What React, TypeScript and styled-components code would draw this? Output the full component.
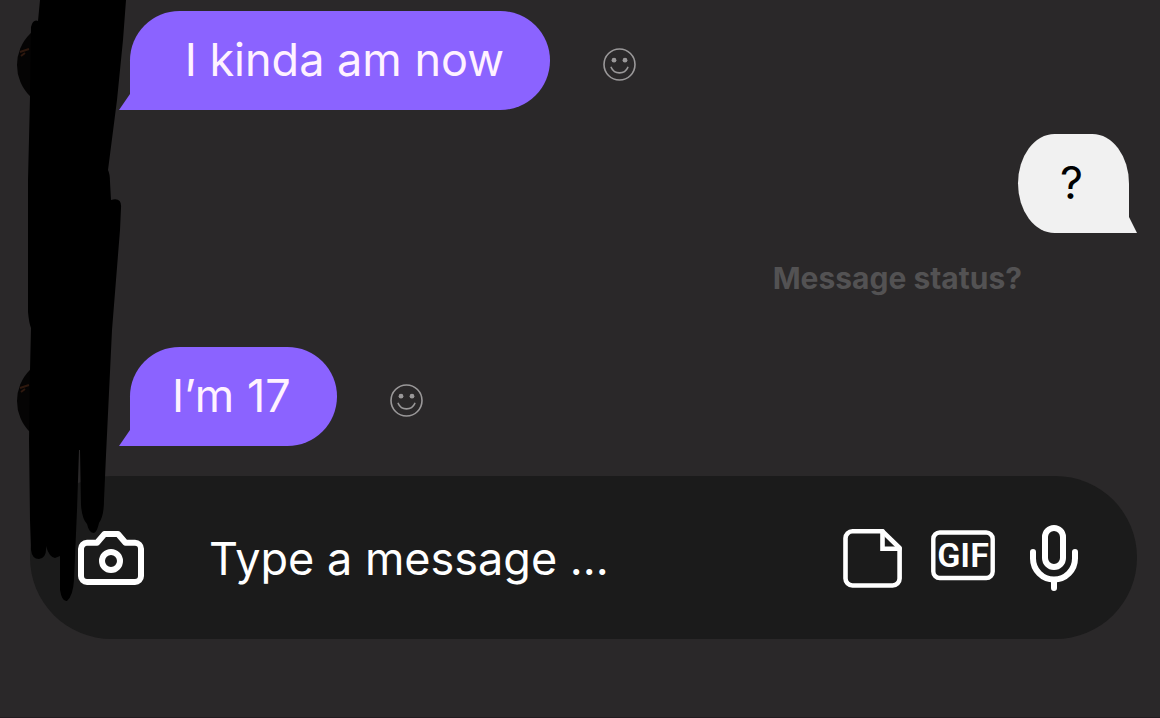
import React from "react";
import styled, { createGlobalStyle, css } from "styled-components";

const GlobalStyle = createGlobalStyle`
  * { box-sizing: border-box; }
  body {
    margin: 0;
    background: #2a2829;
    font-family: Inter, "Liberation Sans", sans-serif;
  }
`;

const Page = styled.main`
  position: relative;
  display: flex;
  flex-direction: column;
  min-height: 100vh;
  padding-top: 11px;
  overflow: hidden;
  background: #2a2829;
  border-bottom: 1px solid #221c20;
`;

const Thread = styled.section`
  display: flex;
  flex-direction: column;
`;

const Row = styled.div<{ $sent?: boolean }>`
  display: flex;
  align-items: center;
  justify-content: ${(p) => (p.$sent ? "flex-end" : "flex-start")};
  padding: ${(p) => (p.$sent ? "24px 31px 0 0" : "0 0 0 17px")};
`;

const Avatar = styled.svg`
  width: 88px;
  height: 88px;
  margin: 8px 25px 0 0;
  flex: none;
`;

const Bubble = styled.p<{ $sent?: boolean }>`
  position: relative;
  margin: 0;
  padding: 20px 46px 21px 42px;
  font-size: 45px;
  line-height: 58px;
  font-weight: 370;
  white-space: pre;

  &::after {
    content: "";
    position: absolute;
    bottom: 0;
    height: 16px;
  }

  ${(p) =>
    p.$sent
      ? css`
          color: #000;
          background: #f1f1f1;
          border-radius: 37px 37px 0 37px / 50px 50px 0 50px;
          &::after {
            left: 100%;
            width: 8px;
            background: #f1f1f1;
            clip-path: polygon(0 0, 100% 100%, 0 100%);
          }
        `
      : css`
          color: #fff2ff;
          background: #8b63ff;
          border-radius: 50px 50px 50px 0;
          &::after {
            right: 100%;
            width: 11px;
            background: #8b63ff;
            clip-path: polygon(100% 0, 100% 100%, 0 100%);
          }
        `}
`;

const ReactButton = styled.button`
  display: flex;
  margin: 8px 0 0 53px;
  padding: 0;
  border: 0;
  background: none;
  color: #9a9899;
  cursor: pointer;
`;

const Status = styled.p`
  margin: 23px 138px 47px 0;
  font-size: 30px;
  line-height: 44px;
  font-weight: 700;
  text-align: right;
  color: #535253;
`;

const Composer = styled.form`
  display: flex;
  align-items: center;
  gap: 25px;
  margin: 30px 23px 78px 30px;
  padding: 49px 50px 48px 48px;
  border-radius: 82px;
  background: #1b1b1b;
`;

const IconButton = styled.button`
  display: flex;
  flex: none;
  padding: 0;
  border: 0;
  background: none;
  color: #fff;
  cursor: pointer;
`;

const MessageInput = styled.input`
  flex: 1;
  min-width: 0;
  height: 66px;
  margin-left: 40px;
  padding: 0;
  border: 0;
  outline: 0;
  background: none;
  color: #fff;
  font: 370 45px/58px Inter, "Liberation Sans", sans-serif;

  &::placeholder {
    color: #fff;
    opacity: 1;
  }
`;

const GifLabel = styled.text`
  font-family: Roboto, "Liberation Sans", sans-serif;
  font-size: 34px;
  font-weight: 600;
  fill: currentColor;
`;

const Scribble = styled.svg`
  position: absolute;
  top: 0;
  left: 0;
  pointer-events: none;
`;

function ProfilePicture() {
  return (
    <Avatar viewBox="0 0 88 88" role="img" aria-label="Profile picture">
      <circle cx="44" cy="44" r="44" fill="#050404" />
      <path d="M3 31l9-3M4 35l4-3" stroke="#2e180e" strokeWidth="2" fill="none" />
    </Avatar>
  );
}

function AddReaction() {
  return (
    <ReactButton type="button" aria-label="Add reaction">
      <svg width="33" height="33" viewBox="0 0 33 33" fill="none" stroke="currentColor">
        <circle cx="16.5" cy="16.5" r="15.500" strokeWidth="1.600" />
        <path d="M8.200 19.500c3.200 7.200 13.400 7.200 16.600 0" strokeWidth="1.700" strokeLinecap="round" />
        <circle cx="11" cy="12.200" r="2.400" fill="currentColor" stroke="none" />
        <circle cx="22" cy="12.200" r="2.400" fill="currentColor" stroke="none" />
      </svg>
    </ReactButton>
  );
}

function Received({ text }: { text: string }) {
  return (
    <Row>
      <ProfilePicture />
      <Bubble>{text}</Bubble>
      <AddReaction />
    </Row>
  );
}

const icon = {
  width: 66,
  height: 66,
  viewBox: "0 0 66 66",
  fill: "none",
  stroke: "currentColor",
  strokeLinejoin: "round",
  strokeLinecap: "round",
} as const;

export default function App() {
  return (
    <>
      <GlobalStyle />
      <Page>
        <Thread>
          <Received text=" I kinda am now" />
          <Row $sent>
            <Bubble $sent>?</Bubble>
          </Row>
          <Status>Message status?</Status>
          <Received text="I’m 17" />
        </Thread>

        <Composer onSubmit={(e) => e.preventDefault()}>
          <IconButton type="button" aria-label="Take a photo">
            <svg {...icon}>
              <path
                d="M9 17.800H19L26.500 9H40L47.500 17.800H57a6 6 0 0 1 6 6V51a6 6 0 0 1-6 6H9a6 6 0 0 1-6-6V23.800a6 6 0 0 1 6-6z"
                strokeWidth="6"
              />
              <circle cx="33" cy="36" r="9" strokeWidth="6" />
            </svg>
          </IconButton>
          <MessageInput type="text" aria-label="Message" placeholder="Type a message ..." />
          <IconButton type="button" aria-label="Stickers">
            <svg {...icon} strokeWidth="4.600">
              <path d="M13.500 6.300H43.500L60.600 23V53.500a7 7 0 0 1-7 7H13.500a7 7 0 0 1-7-7V13.300a7 7 0 0 1 7-7z" />
              <path d="M43.500 6.300V23.700H60.600" strokeLinejoin="miter" />
            </svg>
          </IconButton>
          <IconButton type="button" aria-label="GIFs">
            <svg {...icon}>
              <rect x="3.300" y="7.500" width="59.400" height="45.500" rx="6.500" strokeWidth="4.400" />
              <GifLabel x="33" y="42" textAnchor="middle" stroke="none">
                GIF
              </GifLabel>
            </svg>
          </IconButton>
          <IconButton type="button" aria-label="Record voice message">
            <svg {...icon} strokeWidth="6">
              <rect x="24" y="3" width="18" height="39" rx="9" />
              <path d="M12 27v6.500a21 21 0 0 0 42 0V27M33 55v8" />
            </svg>
          </IconButton>
        </Composer>

        <Scribble width="130" height="610" viewBox="0 0 130 610" aria-hidden="true">
          <path d="M40 0L38 21Q33 19 31 27L30 97L28 180V312Q29 323 31 328L30 370L29 440L30 520L31 550Q32 559 39 559Q47 558 46 546Q49 557 55 558L60 556V590Q62 602 67 601Q73 596 74 580L77 510L79 450H80L81 505Q82 519 87 524Q89 533 94 533Q97 532 99 523Q104 516 104 500L106 455L112 330L120 230L121 208Q122 197 111 200L110 182Q110 174 108 170L117 100L123 40L126 0Z" />
        </Scribble>
      </Page>
    </>
  );
}
